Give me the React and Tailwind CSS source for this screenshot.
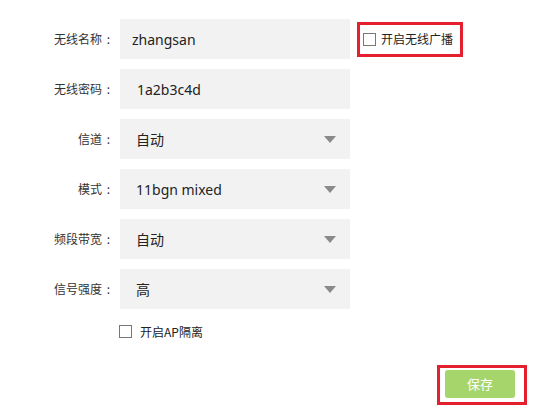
const font = { fontFamily: '"Noto Sans", "Noto Sans CJK SC", sans-serif' }
const cjk = { fontFamily: '"Noto Sans CJK SC", sans-serif' }

const Caret = () => (
  <svg width="12" height="7" viewBox="0 0 12 7" className="shrink-0">
    <path d="M0 0 H12 L6 7 Z" fill="#8a8a8a" />
  </svg>
)

const Row = ({ label, children }) => (
  <div className="flex items-center h-[40px]">
    <div className="w-[115px] flex justify-end text-[12px] text-[#333]" style={cjk}>
      <span>{label}</span>
      <span className="w-[13px] text-center">:</span>
    </div>
    <div className="ml-[5px] w-[230px] h-[40px] bg-[#f2f2f2] flex items-center">{children}</div>
  </div>
)

const Select = ({ value }) => (
  <div className="flex items-center justify-between w-full pl-[16px] pr-[14px] text-[14px] text-[#222]">
    <span>{value}</span>
    <Caret />
  </div>
)

const Box = () => <span className="inline-block w-[13px] h-[13px] border border-[#777] bg-white shrink-0" />

export default function App() {
  return (
    <div className="w-[547px] h-[416px] bg-white overflow-hidden" style={font}>
      <div className="pt-[19px] flex flex-col gap-[10px]">
        <div className="flex items-center">
          <Row label="无线名称">
            <span className="pl-[12px] text-[14px] text-[#222]">zhangsan</span>
          </Row>
          <div className="ml-[7px] h-[35px] w-[106px] border-[3px] border-[#e5202e] flex items-center pl-[3px]">
            <Box />
            <span className="ml-[5px] text-[12px] text-[#222]" style={cjk}>开启无线广播</span>
          </div>
        </div>
        <Row label="无线密码">
          <span className="pl-[17px] text-[14px] text-[#222]">1a2b3c4d</span>
        </Row>
        <Row label="信道">
          <Select value="自动" />
        </Row>
        <Row label="模式">
          <Select value="11bgn mixed" />
        </Row>
        <Row label="频段带宽">
          <Select value="自动" />
        </Row>
        <Row label="信号强度">
          <Select value="高" />
        </Row>
      </div>
      <div className="mt-[16px] pl-[119px] flex items-center h-[13px]">
        <Box />
        <span className="ml-[8px] text-[12px] text-[#222]" style={cjk}>开启AP隔离</span>
      </div>
      <div className="mt-[27px] flex justify-end pr-[20px]">
        <div className="w-[90px] h-[40px] border-[3px] border-[#e5202e] pl-[5px] pt-[2px]">
          <button className="w-[70px] h-[28px] rounded-[3px] bg-[#a6d56b] text-white text-[13px]" style={cjk}>保存</button>
        </div>
      </div>
    </div>
  )
}
